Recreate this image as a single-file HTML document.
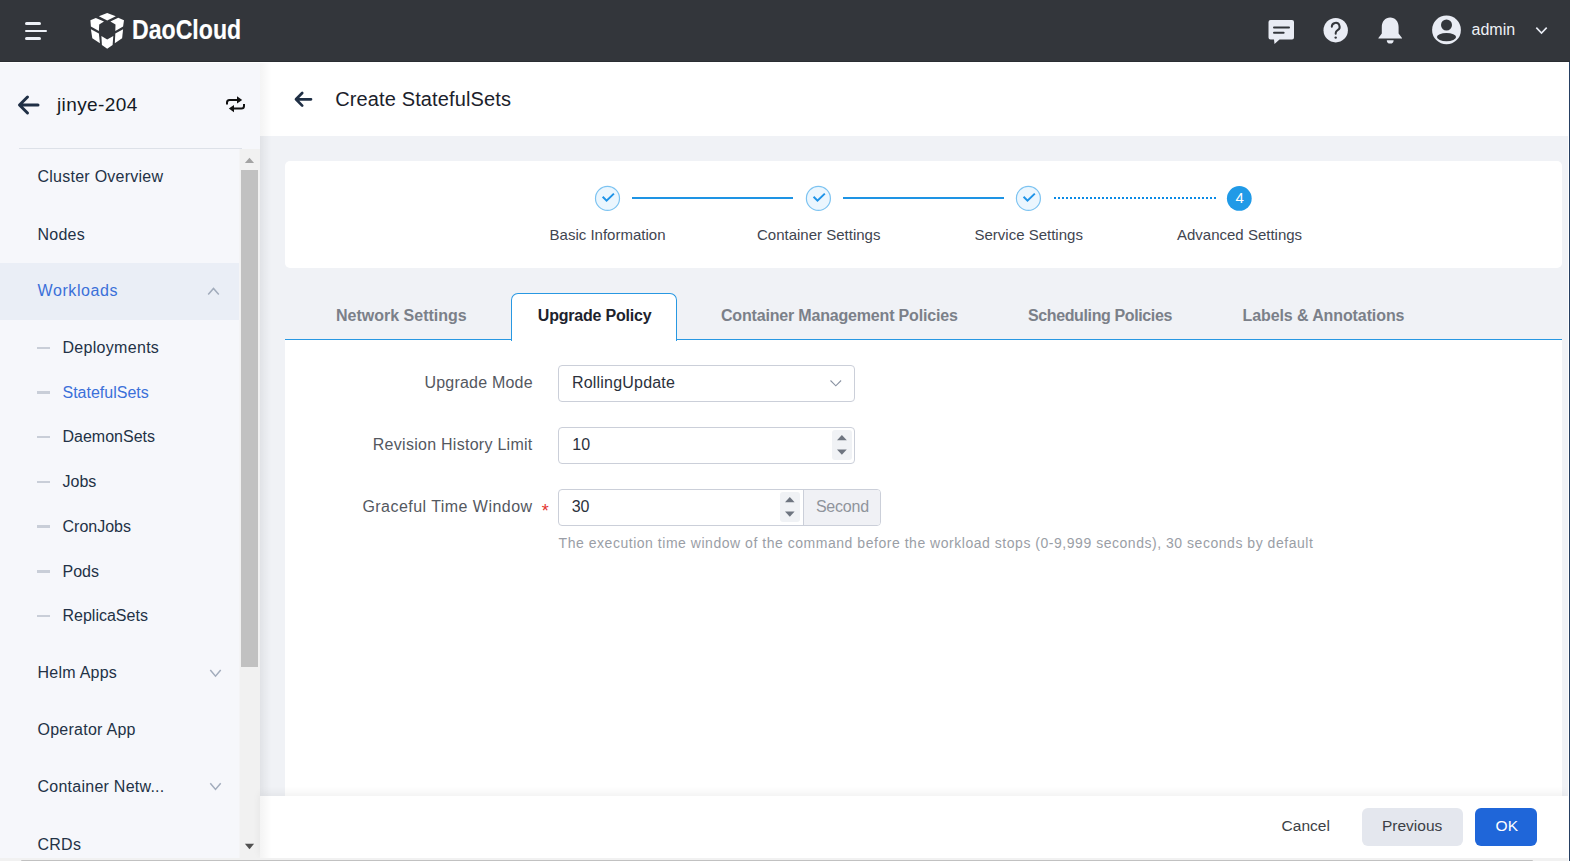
<!DOCTYPE html>
<html><head><meta charset="utf-8">
<style>
*{box-sizing:border-box;margin:0;padding:0}
html,body{width:1570px;height:861px;overflow:hidden;background:#f0f2f6;font-family:"Liberation Sans",sans-serif}
.a{position:absolute;white-space:nowrap;line-height:1}
#hdr{position:absolute;left:0;top:0;width:1570px;height:62px;overflow:visible;background:#33363b;z-index:5}
#side{position:absolute;left:0;top:62px;width:260px;height:799px;background:#f6f7fb;box-shadow:2px 0 10px rgba(0,0,0,0.035)}
#phead{position:absolute;left:260px;top:62px;width:1308px;height:74px;background:#fff}
.si{color:#233246;font-size:16px;letter-spacing:0.25px}
.sub{color:#233246;font-size:16px;letter-spacing:0px}
.dash{position:absolute;left:37px;width:13px;height:2.5px;background:#c9ced8}
</style></head><body>
<div id="hdr">
  <div style="position:absolute;left:0;top:61px;width:1570px;height:1px;background:#2a2d32"></div>
  <div style="position:absolute;left:0;top:62px;width:1568px;height:1px;background:#fff"></div>
  <!-- hamburger -->
  <div style="position:absolute;left:25px;top:22px;width:16px;height:3px;border-radius:2px;background:#eef1f7"></div>
  <div style="position:absolute;left:25px;top:29.5px;width:22px;height:2.5px;border-radius:2px;background:#eef1f7"></div>
  <div style="position:absolute;left:25px;top:37px;width:16px;height:3px;border-radius:2px;background:#eef1f7"></div>
  <!-- logo -->
  <svg style="position:absolute;left:0;top:0" width="130" height="62" viewBox="0 0 130 62">
    <g fill="#fff">
      <polygon points="107.2,12.9 115.8,16.3 107.2,20.5 98.9,16.3"/>
      <polygon points="95.8,18.0 104.0,21.5 99.2,24.4 98.9,31.0 90.9,26.6 90.4,20.2"/>
      <polygon points="118.2,17.8 124.0,20.2 123.1,26.6 115.3,31.0 115.5,24.6 110.4,21.5"/>
      <polygon points="90.9,29.3 98.9,33.4 99.9,43.2 92.3,38.3"/>
      <polygon points="123.1,29.3 115.3,33.4 114.8,43.2 122.1,38.3"/>
      <polygon points="101.4,35.9 107.2,39.5 113.3,35.9 112.6,44.9 107.2,48.8 101.9,44.9"/>
    </g>
  </svg>
  <div class="a" style="left:132.3px;top:15.5px;font-size:27.2px;font-weight:700;color:#fff;-webkit-text-stroke:0.15px #fff;transform:scaleX(0.85);transform-origin:0 0">DaoCloud</div>
  <!-- right icons -->
  <svg style="position:absolute;left:1260px;top:10px" width="150" height="40" viewBox="1260 10 150 40">
    <g fill="#e9ecf4">
      <path d="M1270.5 20h21.5a2 2 0 0 1 2 2v15.6a2 2 0 0 1-2 2h-12.5l-5 4.4l-0.5-4.4h-3.5a2 2 0 0 1-2-2V22a2 2 0 0 1 2-2z"/>
      <circle cx="1335.7" cy="30.2" r="12.2"/>
      <path d="M1390.2 17.6c-5 0-8.4 4-8.4 9.5v6.5l-3.4 4.4v0.6h23.6v-0.6l-3.4-4.4v-6.5c0-5.5-3.4-9.5-8.4-9.5z"/>
      <path d="M1386.8 40.2h6.8a3.4 3.4 0 0 1-6.8 0z"/>
    </g>
    <g stroke="#33363b" stroke-width="2" stroke-linecap="round" fill="none">
      <path d="M1274 27.5h15"/>
      <path d="M1274 32.7h9.6"/>
      <path d="M1331.8 26.8a3.9 3.9 0 1 1 5.8 3.4c-1.2 0.7-1.9 1.5-1.9 2.9v0.6"/>
    </g>
    <circle cx="1335.7" cy="37.6" r="1.2" fill="#33363b"/>
  </svg>
  <svg style="position:absolute;left:1420px;top:8px" width="140" height="44" viewBox="1420 8 140 44">
    <circle cx="1446.5" cy="29.9" r="14.4" fill="#e9ecf4"/>
    <circle cx="1446.5" cy="25" r="5.5" fill="#33363b"/>
    <ellipse cx="1446.5" cy="37.1" rx="9.6" ry="4.1" fill="#33363b"/>
    <path d="M1536.3 27.6l5.2 5.4 5.2-5.4" stroke="#e9ecf4" stroke-width="1.6" fill="none"/>
  </svg>
  <div class="a" style="left:1471.5px;top:22.2px;font-size:16px;color:#eef0f5">admin</div>
</div>

<div id="side"></div>
<div style="position:absolute;left:0;top:263px;width:239px;height:57px;background:#eaeef6"></div>
<svg style="position:absolute;left:0;top:62px" width="260" height="80" viewBox="0 62 260 80">
  <path d="M38 105H20M27.5 97L19.5 105L27.5 113" stroke="#1f2f45" stroke-width="3" fill="none" stroke-linecap="round" stroke-linejoin="round"/>
  <g stroke="#111" stroke-width="2" fill="none">
    <path d="M227 104.5V102.5Q227 100 229.5 100H238"/>
    <path d="M244 104V106Q244 108.6 241.4 108.6H233"/>
  </g>
  <g fill="#111">
    <path d="M237 96.2L242.2 100L237 103.6Z"/>
    <path d="M234 105L228.8 108.6L234 112.2Z"/>
  </g>
</svg>
<div class="a" style="left:57px;top:95.1px;font-size:19px;letter-spacing:0.4px;color:#141a24">jinye-204</div>
<div style="position:absolute;left:19px;top:148px;width:223px;height:1px;background:#dde1e8"></div>
<div class="a si" style="left:37.5px;top:169.36px">Cluster Overview</div>
<div class="a si" style="left:37.5px;top:226.56px">Nodes</div>
<div class="a si" style="left:37.5px;top:283.16px;letter-spacing:0.6px;color:#3b70d9">Workloads</div>
<div class="dash" style="top:346.5px"></div><div class="a sub" style="left:62.5px;top:340.06px;letter-spacing:0.3px">Deployments</div>
<div class="dash" style="top:391.2px"></div><div class="a sub" style="left:62.5px;top:384.76px;color:#3b70d9">StatefulSets</div>
<div class="dash" style="top:435.9px"></div><div class="a sub" style="left:62.5px;top:429.46px">DaemonSets</div>
<div class="dash" style="top:480.6px"></div><div class="a sub" style="left:62.5px;top:474.16px">Jobs</div>
<div class="dash" style="top:525.4px"></div><div class="a sub" style="left:62.5px;top:518.96px">CronJobs</div>
<div class="dash" style="top:570.1px"></div><div class="a sub" style="left:62.5px;top:563.66px">Pods</div>
<div class="dash" style="top:614.8px"></div><div class="a sub" style="left:62.5px;top:608.36px">ReplicaSets</div>
<div class="a si" style="left:37.5px;top:664.96px">Helm Apps</div>
<div class="a si" style="left:37.5px;top:722.16px">Operator App</div>
<div class="a si" style="left:37.5px;top:779.36px">Container Netw...</div>
<div class="a si" style="left:37.5px;top:836.56px">CRDs</div>
<svg style="position:absolute;left:0;top:0" width="260" height="861" viewBox="0 0 260 861">
  <g stroke="#a2acbc" stroke-width="1.5" fill="none">
    <path d="M208.2 294.6L213.5 288.5L218.8 294.6"/>
    <path d="M210.3 670L215.5 676.2L220.7 670"/>
    <path d="M210.3 783.2L215.5 789.4L220.7 783.2"/>
  </g>
  <rect x="239.5" y="149" width="20.5" height="712" fill="#f1f1f1"/>
  <rect x="241" y="170" width="17" height="497" fill="#c1c1c1"/>
  <path d="M244.9 163L249.5 157.8L254.1 163Z" fill="#a3a3a3"/>
  <path d="M244.9 843.8L254.1 843.8L249.5 849.2Z" fill="#505050"/>
</svg>

<div id="phead"></div>
<svg style="position:absolute;left:290px;top:86px" width="26" height="26" viewBox="290 86 26 26">
  <path d="M311 99.3H296.5M302.2 93L296 99.3L302.2 105.6" stroke="#1f2f45" stroke-width="2.7" fill="none" stroke-linecap="round" stroke-linejoin="round"/>
</svg>
<div class="a" style="left:335.2px;top:89.4px;font-size:20px;letter-spacing:0.13px;color:#1b212b">Create StatefulSets</div>

<!-- steps card -->
<div style="position:absolute;left:285px;top:161px;width:1277px;height:107px;background:#fff;border-radius:5px"></div>
<svg style="position:absolute;left:580px;top:180px" width="700" height="40" viewBox="580 180 700 40">
  <g fill="#ebf6fe" stroke="#7cc3f1" stroke-width="1.2">
    <circle cx="607.5" cy="198.4" r="12"/>
    <circle cx="818.4" cy="198.4" r="12"/>
    <circle cx="1028.4" cy="198.4" r="12"/>
  </g>
  <g stroke="#1e93e8" stroke-width="2" fill="none" stroke-linecap="square" stroke-linejoin="miter">
    <path d="M603.4 197.4L606.6 200.6L613.2 194.3"/>
    <path d="M814.3 197.4L817.5 200.6L824.1 194.3"/>
    <path d="M1024.3 197.4L1027.5 200.6L1034.1 194.3"/>
  </g>
  <g stroke="#1e94e4" stroke-width="2">
    <path d="M632 198H793"/>
    <path d="M843 198H1004"/>
  </g>
  <path d="M1054 198H1216" stroke="#0a8ae6" stroke-width="2" stroke-dasharray="2 2"/>
  <circle cx="1239.3" cy="198.4" r="12.4" fill="#209ae7"/>
</svg>
<div class="a" style="left:1235.4px;top:190.4px;font-size:15px;color:#fff">4</div>
<div class="a" style="left:549.6px;top:226.9px;font-size:15px;color:#3f4550">Basic Information</div>
<div class="a" style="left:757px;top:226.9px;font-size:15px;color:#3f4550">Container Settings</div>
<div class="a" style="left:974.5px;top:226.9px;font-size:15px;color:#3f4550">Service Settings</div>
<div class="a" style="left:1177px;top:226.9px;font-size:15px;color:#3f4550">Advanced Settings</div>

<!-- tabs -->
<div style="position:absolute;left:285px;top:338.5px;width:1277px;height:1.5px;background:#2898e2"></div>
<div style="position:absolute;left:285px;top:340px;width:1277px;height:456px;background:#fff"></div>
<div style="position:absolute;left:511px;top:293px;width:166px;height:48px;background:#fff;border:1px solid #2898e2;border-bottom:none;border-radius:7px 7px 0 0"></div>
<div class="a" style="left:336px;top:308px;font-size:16px;font-weight:700;color:#7b8089">Network Settings</div>
<div class="a" style="left:537.8px;top:308px;font-size:16px;font-weight:700;letter-spacing:-0.2px;color:#1d232d">Upgrade Policy</div>
<div class="a" style="left:721px;top:308px;font-size:16px;font-weight:700;letter-spacing:-0.18px;color:#7b8089">Container Management Policies</div>
<div class="a" style="left:1028px;top:308px;font-size:16px;font-weight:700;letter-spacing:-0.38px;color:#7b8089">Scheduling Policies</div>
<div class="a" style="left:1242.5px;top:308px;font-size:16px;font-weight:700;letter-spacing:-0.1px;color:#7b8089">Labels &amp; Annotations</div>

<!-- form -->
<div class="a" style="left:424.5px;top:375.2px;font-size:16px;letter-spacing:0.2px;color:#54585f">Upgrade Mode</div>
<div style="position:absolute;left:558px;top:365px;width:297px;height:37px;border:1px solid #cbcfd9;border-radius:4px;background:#fff"></div>
<div class="a" style="left:572px;top:375.2px;font-size:16px;letter-spacing:0.2px;color:#2b313c">RollingUpdate</div>
<svg style="position:absolute;left:826px;top:376px" width="20" height="14" viewBox="826 376 20 14">
  <path d="M830.5 380.5L835.8 385.8L841.1 380.5" stroke="#8a93a3" stroke-width="1.1" fill="none"/>
</svg>

<div class="a" style="left:372.8px;top:437.2px;font-size:16px;letter-spacing:0.27px;color:#54585f">Revision History Limit</div>
<div style="position:absolute;left:558px;top:427px;width:297px;height:37px;border:1px solid #cbcfd9;border-radius:4px;background:#fff"></div>
<div class="a" style="left:572.3px;top:437.2px;font-size:16px;color:#2b313c">10</div>
<div style="position:absolute;left:832px;top:430px;width:20px;height:29.5px;background:#f0f2f5;border-radius:3px"></div>
<svg style="position:absolute;left:832px;top:430px" width="20" height="30" viewBox="832 430 20 30">
  <path d="M837 440.2L841.9 435.1L846.8 440.2Z" fill="#6e7580"/>
  <path d="M837 449.6L846.8 449.6L841.9 454.7Z" fill="#6e7580"/>
</svg>

<div class="a" style="left:362.4px;top:499.1px;font-size:16px;letter-spacing:0.46px;color:#54585f">Graceful Time Window</div>
<div class="a" style="left:541.8px;top:502px;font-size:18px;color:#e3342f">*</div>
<div style="position:absolute;left:558px;top:489px;width:323px;height:37px;border:1px solid #cbcfd9;border-radius:4px;background:#fff;overflow:hidden">
  <div style="position:absolute;left:243.5px;top:-1px;width:80px;height:37px;border-left:1px solid #cbcfd9;background:#f0f1f5"></div>
</div>
<div class="a" style="left:571.7px;top:499.1px;font-size:16px;color:#2b313c">30</div>
<div style="position:absolute;left:780px;top:492px;width:19.5px;height:29.5px;background:#f0f2f5;border-radius:3px"></div>
<svg style="position:absolute;left:780px;top:492px" width="20" height="30" viewBox="780 492 20 30">
  <path d="M785 502.2L789.8 497.1L794.6 502.2Z" fill="#6e7580"/>
  <path d="M785 511.6L794.6 511.6L789.8 516.7Z" fill="#6e7580"/>
</svg>
<div class="a" style="left:815.9px;top:499.1px;font-size:16px;letter-spacing:-0.2px;color:#8f949c">Second</div>
<div class="a" style="left:558.6px;top:535.8px;font-size:14px;letter-spacing:0.53px;color:#9a9ea6">The execution time window of the command before the workload stops (0-9,999 seconds), 30 seconds by default</div>

<!-- footer -->
<div style="position:absolute;left:260px;top:796px;width:1308px;height:62px;background:#fff;box-shadow:0 -3px 8px rgba(0,0,0,0.06)"></div>
<div class="a" style="left:1281.6px;top:817.8px;font-size:15.5px;color:#3c3f46">Cancel</div>
<div style="position:absolute;left:1362px;top:808.3px;width:101px;height:37.3px;background:#e4e7ee;border-radius:6px"></div>
<div class="a" style="left:1382px;top:817.8px;font-size:15.5px;color:#3c3f46">Previous</div>
<div style="position:absolute;left:1475.2px;top:808.3px;width:61.6px;height:37.3px;background:#1f66d9;border-radius:6px"></div>
<div class="a" style="left:1495.6px;top:817.8px;font-size:15.5px;color:#fff">OK</div>

<div style="position:absolute;left:260px;top:62px;width:12px;height:799px;background:linear-gradient(to right,rgba(0,0,0,0.045),rgba(0,0,0,0))"></div>
<!-- bottom scrollbar & right edge -->
<div style="position:absolute;left:0;top:858px;width:1568px;height:3px;background:#f1f1f1"></div>
<div style="position:absolute;left:21px;top:859.5px;width:1512px;height:2px;background:#c1c1c1;border-radius:1px"></div>
<div style="position:absolute;left:1568px;top:62px;width:1px;height:799px;background:#fff"></div>
<div style="position:absolute;left:1569px;top:0;width:1px;height:861px;background:#263f62"></div>

</body></html>
